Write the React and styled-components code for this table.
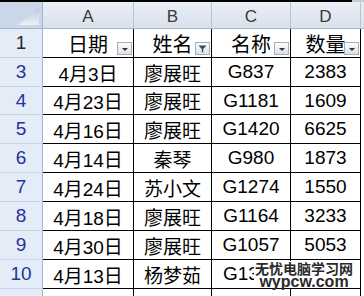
import React from "react";
import styled, { createGlobalStyle } from "styled-components";

const Global = createGlobalStyle`
  html, body { margin: 0; padding: 0; background: #fff; overflow: hidden; }
  #root { width: 364px; height: 296px; overflow: hidden; }
`;

const COLS = "43px 91px 78px 79px 70px 3px";

const Sheet = styled.div`
  position: relative;
  width: 364px;
  height: 296px;
  display: flex;
  flex-direction: column;
  font-family: "Liberation Sans", "Noto Sans CJK SC", sans-serif;
  overflow: hidden;
`;

const TopStrip = styled.div`
  height: 2px;
  flex: none;
  background: linear-gradient(to right, #000 352px, #c9cdd3 352px);
`;

const Row = styled.div`
  display: grid;
  grid-template-columns: ${COLS};
  height: ${(p) => p.$h}px;
  flex: none;
`;

const Corner = styled.div`
  box-sizing: border-box;
  background: #cad7e8;
  border-right: 1px solid #9eb6ce;
  border-bottom: 1px solid #9eb6ce;
  display: flex;
  align-items: flex-end;
  justify-content: flex-end;
  padding: 0 3px 3px 0;
`;

const ColHead = styled.div`
  box-sizing: border-box;
  background: linear-gradient(#eaeff6, #dae2ec);
  border-right: 1px solid #b7c4d4;
  border-bottom: 1px solid #9eb6ce;
  display: flex;
  align-items: center;
  justify-content: center;
  padding-top: 3px;
  font-size: 17px;
  color: #3a3a3a;
`;

const HeadFill = styled.div`
  background: linear-gradient(#eaeff6, #dae2ec);
  border-bottom: 1px solid #9eb6ce;
  box-sizing: border-box;
`;

const RowHead = styled.div`
  box-sizing: border-box;
  background: #e4ecf7;
  border-right: 1px solid #9eb6ce;
  border-bottom: 1px solid #c6d3e3;
  display: flex;
  align-items: center;
  justify-content: center;
  font-size: 19px;
  color: ${(p) => (p.$dim ? "#2a2a2a" : "#25329a")};
`;

const Cell = styled.div`
  position: relative;
  box-sizing: border-box;
  background: #fff;
  border-right: 1px solid #000;
  border-bottom: 1px solid #000;
  display: flex;
  align-items: center;
  justify-content: ${(p) => (p.$left ? "flex-start" : "center")};
  padding-left: ${(p) => (p.$left ? "11px" : "0")};
  font-size: ${(p) => (p.$title ? 20 : 19)}px;
  color: #000;
  white-space: nowrap;
  overflow: hidden;
`;

const Fill = styled.div`
  background: #fff;
`;

const FilterBtn = styled.span`
  position: absolute;
  right: 1px;
  bottom: 2px;
  width: 15px;
  height: 13px;
  box-sizing: border-box;
  border: 1px solid #a3aebc;
  background: linear-gradient(#fbfcfd, #dde2e8);
  display: flex;
  align-items: center;
  justify-content: center;
`;

const Arrow = styled.span`
  width: 0;
  height: 0;
  margin-top: 2px;
  border-left: 3px solid transparent;
  border-right: 3px solid transparent;
  border-top: 3px solid #333;
`;

const Watermark = styled.div`
  position: absolute;
  left: 254px;
  top: 261px;
  width: 100px;
  height: 27px;
  background: #fff;
  display: flex;
  flex-direction: column;
  align-items: center;
  font-weight: bold;
  color: #2a2a2a;
`;

const WmCn = styled.div`
  font-family: "Noto Sans CJK SC", sans-serif;
  font-size: 14px;
  line-height: 14px;
`;

const WmEn = styled.div`
  font-family: "Liberation Sans", sans-serif;
  font-size: 16px;
  line-height: 13px;
`;

const CornerTri = () => (
  <svg width="21" height="18" viewBox="0 0 21 18">
    <defs>
      <linearGradient id="tg" x1="0" y1="0" x2="0" y2="1">
        <stop offset="0" stopColor="#b9c6d6" />
        <stop offset="1" stopColor="#eef0f3" />
      </linearGradient>
    </defs>
    <polygon points="21,0 21,18 0,18" fill="url(#tg)" />
  </svg>
);

const Funnel = () => (
  <svg width="9" height="8" viewBox="0 0 9 8">
    <path d="M0.5 0.5 H8.5 L5.2 4 V7.5 L3.8 6.8 V4 Z" fill="#3b4a5c" />
  </svg>
);

const data = [
  { n: 3, h: 29, d: "4月3日", name: "廖展旺", code: "G837", q: "2383" },
  { n: 4, h: 28, d: "4月23日", name: "廖展旺", code: "G1181", q: "1609" },
  { n: 5, h: 29, d: "4月16日", name: "廖展旺", code: "G1420", q: "6625" },
  { n: 6, h: 29, d: "4月14日", name: "秦琴", code: "G980", q: "1873" },
  { n: 7, h: 29, d: "4月24日", name: "苏小文", code: "G1274", q: "1550" },
  { n: 8, h: 29, d: "4月18日", name: "廖展旺", code: "G1164", q: "3233" },
  { n: 9, h: 29, d: "4月30日", name: "廖展旺", code: "G1057", q: "5053" },
  { n: 10, h: 29, d: "4月13日", name: "杨梦茹", code: "G13", q: "", cut: true },
];

const titles = [
  { t: "日期", f: false },
  { t: "姓名", f: true },
  { t: "名称", f: false },
  { t: "数量", f: false },
];

export default function App() {
  return (
    <>
      <Global />
      <Sheet>
        <TopStrip />
        <Row $h={27}>
          <Corner>
            <CornerTri />
          </Corner>
          <ColHead>A</ColHead>
          <ColHead>B</ColHead>
          <ColHead>C</ColHead>
          <ColHead>D</ColHead>
          <HeadFill />
        </Row>
        <Row $h={29}>
          <RowHead $dim>1</RowHead>
          {titles.map((c) => (
            <Cell key={c.t} $title>
              {c.t}
              <FilterBtn>{c.f ? <Funnel /> : <Arrow />}</FilterBtn>
            </Cell>
          ))}
          <Fill />
        </Row>
        {data.map((r) => (
          <Row key={r.n} $h={r.h}>
            <RowHead>{r.n}</RowHead>
            <Cell>{r.d}</Cell>
            <Cell>{r.name}</Cell>
            <Cell $left={r.cut}>{r.code}</Cell>
            <Cell>{r.q}</Cell>
            <Fill />
          </Row>
        ))}
        <Row $h={29}>
          <RowHead />
          <Cell />
          <Cell />
          <Cell />
          <Cell />
          <Fill />
        </Row>
        <Watermark>
          <WmCn>无忧电脑学习网</WmCn>
          <WmEn>wypcw.com</WmEn>
        </Watermark>
      </Sheet>
    </>
  );
}
